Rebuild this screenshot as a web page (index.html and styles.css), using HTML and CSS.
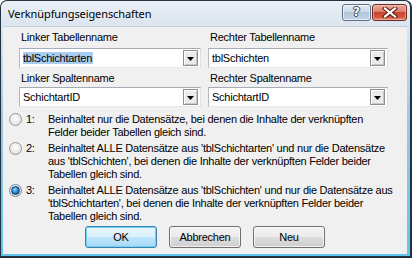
FILE: index.html
```html
<!DOCTYPE html>
<html lang="de">
<head>
<meta charset="utf-8">
<title>Verknüpfungseigenschaften</title>
<link rel="stylesheet" href="styles.css">
</head>
<body>
<div class="window">
  <div class="titlebar">
    <span class="title">Verknüpfungseigenschaften</span>
    <div class="caption-buttons">
      <span class="cbtn help">?</span>
      <span class="cbtn close">
        <svg width="16" height="11" viewBox="0 0 16 11">
          <path d="M3 1.5 L13 9.5 M13 1.5 L3 9.5" stroke="#5a1a12" stroke-width="4.2" stroke-linecap="square" fill="none"/>
          <path d="M3 1.5 L13 9.5 M13 1.5 L3 9.5" stroke="#ffffff" stroke-width="2.2" stroke-linecap="square" fill="none"/>
        </svg>
      </span>
    </div>
  </div>
  <div class="client">
    <div class="fields">
      <div class="field">
        <div class="label label-first">Linker Tabellenname</div>
        <div class="combo"><span class="value"><span class="selected">tblSchichtarten</span></span><span class="drop"><svg width="7" height="4" viewBox="0 0 7 4"><path d="M0 0 H7 L3.5 4 Z" fill="#000"/></svg></span></div>
      </div>
      <div class="field">
        <div class="label label-first">Rechter Tabellenname</div>
        <div class="combo"><span class="value">tblSchichten</span><span class="drop"><svg width="7" height="4" viewBox="0 0 7 4"><path d="M0 0 H7 L3.5 4 Z" fill="#000"/></svg></span></div>
      </div>
      <div class="field">
        <div class="label label-second">Linker Spaltenname</div>
        <div class="combo"><span class="value">SchichtartID</span><span class="drop"><svg width="7" height="4" viewBox="0 0 7 4"><path d="M0 0 H7 L3.5 4 Z" fill="#000"/></svg></span></div>
      </div>
      <div class="field">
        <div class="label label-second">Rechter Spaltenname</div>
        <div class="combo"><span class="value">SchichtartID</span><span class="drop"><svg width="7" height="4" viewBox="0 0 7 4"><path d="M0 0 H7 L3.5 4 Z" fill="#000"/></svg></span></div>
      </div>
    </div>

    <div class="options">
      <div class="option">
        <span class="radio"></span>
        <span class="num">1:</span>
        <span class="text">Beinhaltet nur die Datensätze, bei denen die Inhalte der verknüpften<br>Felder beider Tabellen gleich sind.</span>
      </div>
      <div class="option">
        <span class="radio"></span>
        <span class="num">2:</span>
        <span class="text">Beinhaltet ALLE Datensätze aus 'tblSchichtarten' und nur die Datensätze<br>aus 'tblSchichten', bei denen die Inhalte der verknüpften Felder beider<br>Tabellen gleich sind.</span>
      </div>
      <div class="option">
        <span class="radio checked"></span>
        <span class="num">3:</span>
        <span class="text">Beinhaltet ALLE Datensätze aus 'tblSchichten' und nur die Datensätze aus<br>'tblSchichtarten', bei denen die Inhalte der verknüpften Felder beider<br>Tabellen gleich sind.</span>
      </div>
    </div>

    <div class="buttons">
      <span class="btn default">OK</span>
      <span class="btn">Abbrechen</span>
      <span class="btn">Neu</span>
    </div>
  </div>
</div>
</body>
</html>
```

FILE: styles.css
```css
* { box-sizing: border-box; }
html, body { margin: 0; padding: 0; }
body {
  width: 412px;
  height: 258px;
  overflow: hidden;
  background: #ffffff;
  font-family: "Liberation Sans", Arial, sans-serif;
  font-size: 11px;
  letter-spacing: -0.25px;
  color: #000;
}
.window {
  width: 412px;
  height: 258px;
  border: 1px solid #24313f;
  border-right-width: 2px;
  border-bottom-width: 2px;
  border-radius: 7px 7px 0 0;
  background: linear-gradient(to bottom, #eaf0f6 0px, #dbe5ef 25px, #9cc6e8 120px, #5fc6ee 100%);
  padding: 0 3px 2px 2px;
  display: flex;
  flex-direction: column;
}
.titlebar {
  height: 25px;
  flex: none;
  display: flex;
  align-items: flex-start;
  justify-content: space-between;
}
.title {
  font-family: "Noto Sans", "Open Sans", sans-serif;
  font-size: 11px;
  letter-spacing: -0.1px;
  line-height: 16px;
  padding: 5px 0 0 5px;
  color: #000;
}
.caption-buttons {
  display: flex;
  gap: 1px;
  margin-top: 3px;
}
.cbtn {
  height: 17px;
  border-radius: 3px;
  display: flex;
  align-items: center;
  justify-content: center;
}
.help {
  width: 29px;
  border: 1px solid #5f7186;
  background: linear-gradient(to bottom, #e4ecf4 0%, #ccdae8 45%, #b4c6d9 50%, #c3d4e5 100%);
  box-shadow: inset 0 0 0 1px rgba(255,255,255,0.6);
  color: #fff;
  font-family: "DejaVu Sans", sans-serif;
  font-weight: bold;
  font-size: 12px;
  letter-spacing: 0;
  line-height: 15px;
  text-shadow: 1px 0 0 #3b4654, -1px 0 0 #3b4654, 0 1px 0 #3b4654, 0 -1px 0 #3b4654;
}
.close {
  width: 35px;
  border: 1px solid #6b2a22;
  background: linear-gradient(to bottom, #eaa99c 0%, #db7f6c 45%, #c8452f 50%, #d2573f 80%, #e58a6a 100%);
  box-shadow: inset 0 0 0 1px rgba(255,220,210,0.45);
}
.client {
  flex: 1;
  background: #f0f0f0;
  border-top: 1px solid #c2d0dd;
  padding: 4px 0 0 0;
  display: flex;
  flex-direction: column;
}
.fields {
  display: grid;
  grid-template-columns: 182px 180px;
  column-gap: 7px;
  padding-left: 16px;
}
.label {
  line-height: 13px;
  padding-left: 2px;
  white-space: nowrap;
}
.label-first { margin-bottom: 4px; }
.label-second { margin-top: 4px; margin-bottom: 2px; }
.combo {
  height: 20px;
  background: #fff;
  border: 1px solid #7f9db9;
  border-color: #a5acb5 #dbdfe6 #e3e9ef #b5bac2;
  display: flex;
  align-items: center;
  justify-content: space-between;
  padding: 0 2px 0 3px;
}
.value {
  line-height: 13px;
  white-space: nowrap;
}
.selected {
  background: #a8cdf2;
  padding: 0 1px 0 0;
}
.drop {
  width: 15px;
  height: 16px;
  border: 1px solid #8e8f8f;
  background: #ebebeb;
  box-shadow: inset 1px 1px 0 #ffffff, inset -1px -1px 0 #c7c7c7;
  display: flex;
  align-items: center;
  justify-content: center;
  padding-top: 1px;
}
.options {
  margin-top: 6px;
  padding-left: 6px;
  display: flex;
  flex-direction: column;
  gap: 3px;
}
.option {
  display: flex;
  align-items: flex-start;
  line-height: 13px;
}
.radio {
  width: 13px;
  height: 13px;
  flex: none;
  border-radius: 50%;
  border: 1px solid #959595;
  background: radial-gradient(circle at 50% 40%, #ffffff 0%, #f2f2f2 35%, #d6d6d6 100%);
  margin-right: 3px;
  display: flex;
  align-items: center;
  justify-content: center;
}
.radio.checked {
  border-color: #6e8aa6;
}
.radio.checked::after {
  content: "";
  width: 7px;
  height: 7px;
  border-radius: 50%;
  background: radial-gradient(circle at 40% 35%, #9fd7ff 0%, #2c8ad6 45%, #0b3f78 100%);
  border: 1px solid #183b60;
}
.num {
  width: 23px;
  flex: none;
  padding-left: 1px;
}
.text {
  white-space: nowrap;
}
.buttons {
  margin-top: 3px;
  display: flex;
  justify-content: center;
  gap: 12px;
}
.btn {
  width: 72px;
  height: 22px;
  border: 1px solid #707070;
  border-radius: 3px;
  background: linear-gradient(to bottom, #f2f2f2 0%, #ebebeb 48%, #dddddd 52%, #cfcfcf 100%);
  box-shadow: inset 0 0 0 1px rgba(255,255,255,0.7);
  display: flex;
  align-items: center;
  justify-content: center;
  line-height: 13px;
}
.btn.default {
  border-color: #3c7fb1;
  background: linear-gradient(to bottom, #eaf6fd 0%, #d9f0fc 48%, #bee6fd 52%, #a7d9f5 100%);
  box-shadow: inset 0 0 0 1px #6fd2f5;
}
```
